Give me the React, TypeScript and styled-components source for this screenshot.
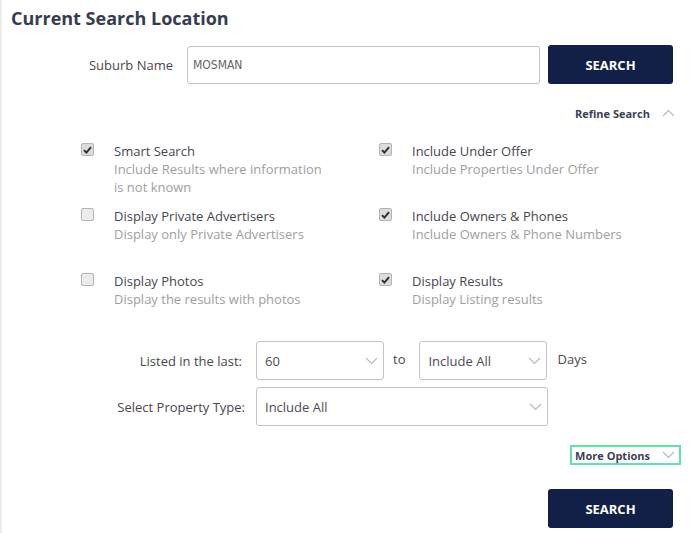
import React from "react";
import styled, { createGlobalStyle } from "styled-components";

const GlobalStyle = createGlobalStyle`
  html, body {
    margin: 0;
    padding: 0;
    background: #fff;
  }
  body {
    font-family: "Open Sans", "Noto Sans", sans-serif;
    color: #444;
  }
`;

const Panel = styled.div`
  box-sizing: border-box;
  width: 691px;
  min-height: 533px;
  border-left: 2px solid #ececec;
  padding: 0 0 4px 0;
`;

const Title = styled.h2`
  margin: 0;
  padding: 6px 0 0 9px;
  font-size: 18px;
  line-height: 24px;
  font-weight: 700;
  color: #363c50;
`;

const SuburbRow = styled.div`
  display: flex;
  align-items: center;
  margin-top: 15px;
`;

const FieldLabel = styled.label<{ $width: number }>`
  width: ${(p) => p.$width}px;
  flex: none;
  text-align: right;
  font-size: 13px;
  color: #4a4652;
`;

const TextInput = styled.input`
  box-sizing: border-box;
  width: 353px;
  height: 38px;
  margin-left: 14px;
  padding: 0 5px;
  border: 1px solid #c2c0c8;
  border-radius: 3px;
  font-family: "Liberation Sans Narrow", "DejaVu Sans Condensed", sans-serif;
  font-size: 12px;
  color: #66626c;
  outline: none;
`;

const SearchButton = styled.button`
  box-sizing: border-box;
  width: 125px;
  height: 39px;
  margin-left: 8px;
  border: none;
  border-radius: 3px;
  background: #121f46;
  color: #fff;
  font-family: "Open Sans", sans-serif;
  font-size: 13px;
  font-weight: 700;
  cursor: pointer;
`;

const ToggleRow = styled.div<{ $top: number }>`
  display: flex;
  justify-content: flex-end;
  margin-top: ${(p) => p.$top}px;
`;

const Toggle = styled.div<{ $outlined?: boolean }>`
  display: flex;
  align-items: center;
  box-sizing: border-box;
  height: 20px;
  padding: 0 4px 0 3px;
  margin-right: 10px;
  border: 2px solid ${(p) => (p.$outlined ? "#5fe3a8" : "transparent")};
  font-size: 11px;
  font-weight: 700;
  color: #3a3f55;
  gap: 12px;
`;

const OptionGrid = styled.div`
  display: grid;
  grid-template-columns: 298px 298px;
  grid-auto-rows: 65px;
  margin-top: 19px;
  padding-left: 79px;
`;

const Option = styled.div`
  display: flex;
  align-items: flex-start;
`;

const Box = styled.span<{ $checked: boolean }>`
  flex: none;
  box-sizing: border-box;
  display: flex;
  align-items: center;
  justify-content: center;
  width: 13px;
  height: 13px;
  margin-top: 1px;
  border: 1px solid #b4b4b4;
  border-radius: 2px;
  background: ${(p) => (p.$checked ? "#dcdcdc" : "#ececec")};
`;

const OptionText = styled.div`
  margin-left: 20px;
  font-size: 13px;
  line-height: 18px;
  width: 220px;
`;

const OptionTitle = styled.div`
  color: #49454f;
`;

const OptionDesc = styled.div`
  color: #a09ea4;
`;

const FormRow = styled.div<{ $top: number }>`
  display: flex;
  align-items: center;
  margin-top: ${(p) => p.$top}px;
`;

const Spacer = styled.span<{ $width: number }>`
  flex: none;
  width: ${(p) => p.$width}px;
`;

const SelectWrap = styled.div<{ $width: number }>`
  position: relative;
  width: ${(p) => p.$width}px;
  height: 39px;
  flex: none;
`;

const Select = styled.select`
  appearance: none;
  box-sizing: border-box;
  width: 100%;
  height: 100%;
  padding: 0 0 0 8px;
  border: 1px solid #c4c2ca;
  border-radius: 3px;
  background: #fff;
  font-family: "Open Sans", sans-serif;
  font-size: 13px;
  color: #4e4a55;
  outline: none;
`;

const Chevron = styled.svg`
  position: absolute;
  right: 6px;
  top: 16px;
  pointer-events: none;
`;

const Word = styled.span<{ $left: number; $right: number }>`
  margin: -4px ${(p) => p.$right}px 0 ${(p) => p.$left}px;
  font-size: 13px;
  color: #4a4652;
`;

const BottomRow = styled.div`
  display: flex;
  justify-content: flex-end;
  padding-right: 18px;
  margin-top: 24px;
`;

function Arrow({ up, color = "#b8b8bc" }: { up?: boolean; color?: string }) {
  return (
    <svg width="13" height="8" viewBox="0 0 13 8">
      <path
        d={up ? "M1 7 L6.5 1.5 L12 7" : "M1 1 L6.5 6.5 L12 1"}
        fill="none"
        stroke={color}
        strokeWidth="1.1"
      />
    </svg>
  );
}

function DropSelect({ width, value }: { width: number; value: string }) {
  return (
    <SelectWrap $width={width}>
      <Select defaultValue={value}>
        <option>{value}</option>
      </Select>
      <Chevron width="13" height="8" viewBox="0 0 13 8">
        <path d="M1 1 L6.5 6.5 L12 1" fill="none" stroke="#b8b8bc" strokeWidth="1.1" />
      </Chevron>
    </SelectWrap>
  );
}

const options = [
  { title: "Smart Search", desc: "Include Results where information is not known", checked: true },
  { title: "Include Under Offer", desc: "Include Properties Under Offer", checked: true },
  { title: "Display Private Advertisers", desc: "Display only Private Advertisers", checked: false },
  { title: "Include Owners & Phones", desc: "Include Owners & Phone Numbers", checked: true },
  { title: "Display Photos", desc: "Display the results with photos", checked: false },
  { title: "Display Results", desc: "Display Listing results", checked: true },
];

export default function App() {
  return (
    <>
      <GlobalStyle />
      <Panel>
        <Title>Current Search Location</Title>
        <SuburbRow>
          <FieldLabel $width={171}>Suburb Name</FieldLabel>
          <TextInput defaultValue="MOSMAN" />
          <SearchButton>SEARCH</SearchButton>
        </SuburbRow>

        <ToggleRow $top={19}>
          <Toggle>
            Refine Search
            <Arrow up />
          </Toggle>
        </ToggleRow>

        <OptionGrid>
          {options.map((o) => (
            <Option key={o.title}>
              <Box $checked={o.checked}>
                {o.checked && (
                  <svg width="9" height="8" viewBox="0 0 9 8">
                    <path d="M1 4.2 L3.4 6.6 L8 1.2" fill="none" stroke="#2b2b2b" strokeWidth="1.9" />
                  </svg>
                )}
              </Box>
              <OptionText>
                <OptionTitle>{o.title}</OptionTitle>
                <OptionDesc>{o.desc}</OptionDesc>
              </OptionText>
            </Option>
          ))}
        </OptionGrid>

        <FormRow $top={4}>
          <FieldLabel $width={240}>Listed in the last:</FieldLabel>
          <Spacer $width={14} />
          <DropSelect width={128} value="60" />
          <Word $left={9} $right={14}>to</Word>
          <DropSelect width={128} value="Include All" />
          <Word $left={10} $right={0}>Days</Word>
        </FormRow>
        <FormRow $top={7}>
          <FieldLabel $width={243}>Select Property Type:</FieldLabel>
          <Spacer $width={11} />
          <DropSelect width={292} value="Include All" />
        </FormRow>

        <ToggleRow $top={19}>
          <Toggle $outlined>
            More Options
            <Arrow />
          </Toggle>
        </ToggleRow>

        <BottomRow>
          <SearchButton>SEARCH</SearchButton>
        </BottomRow>
      </Panel>
    </>
  );
}
